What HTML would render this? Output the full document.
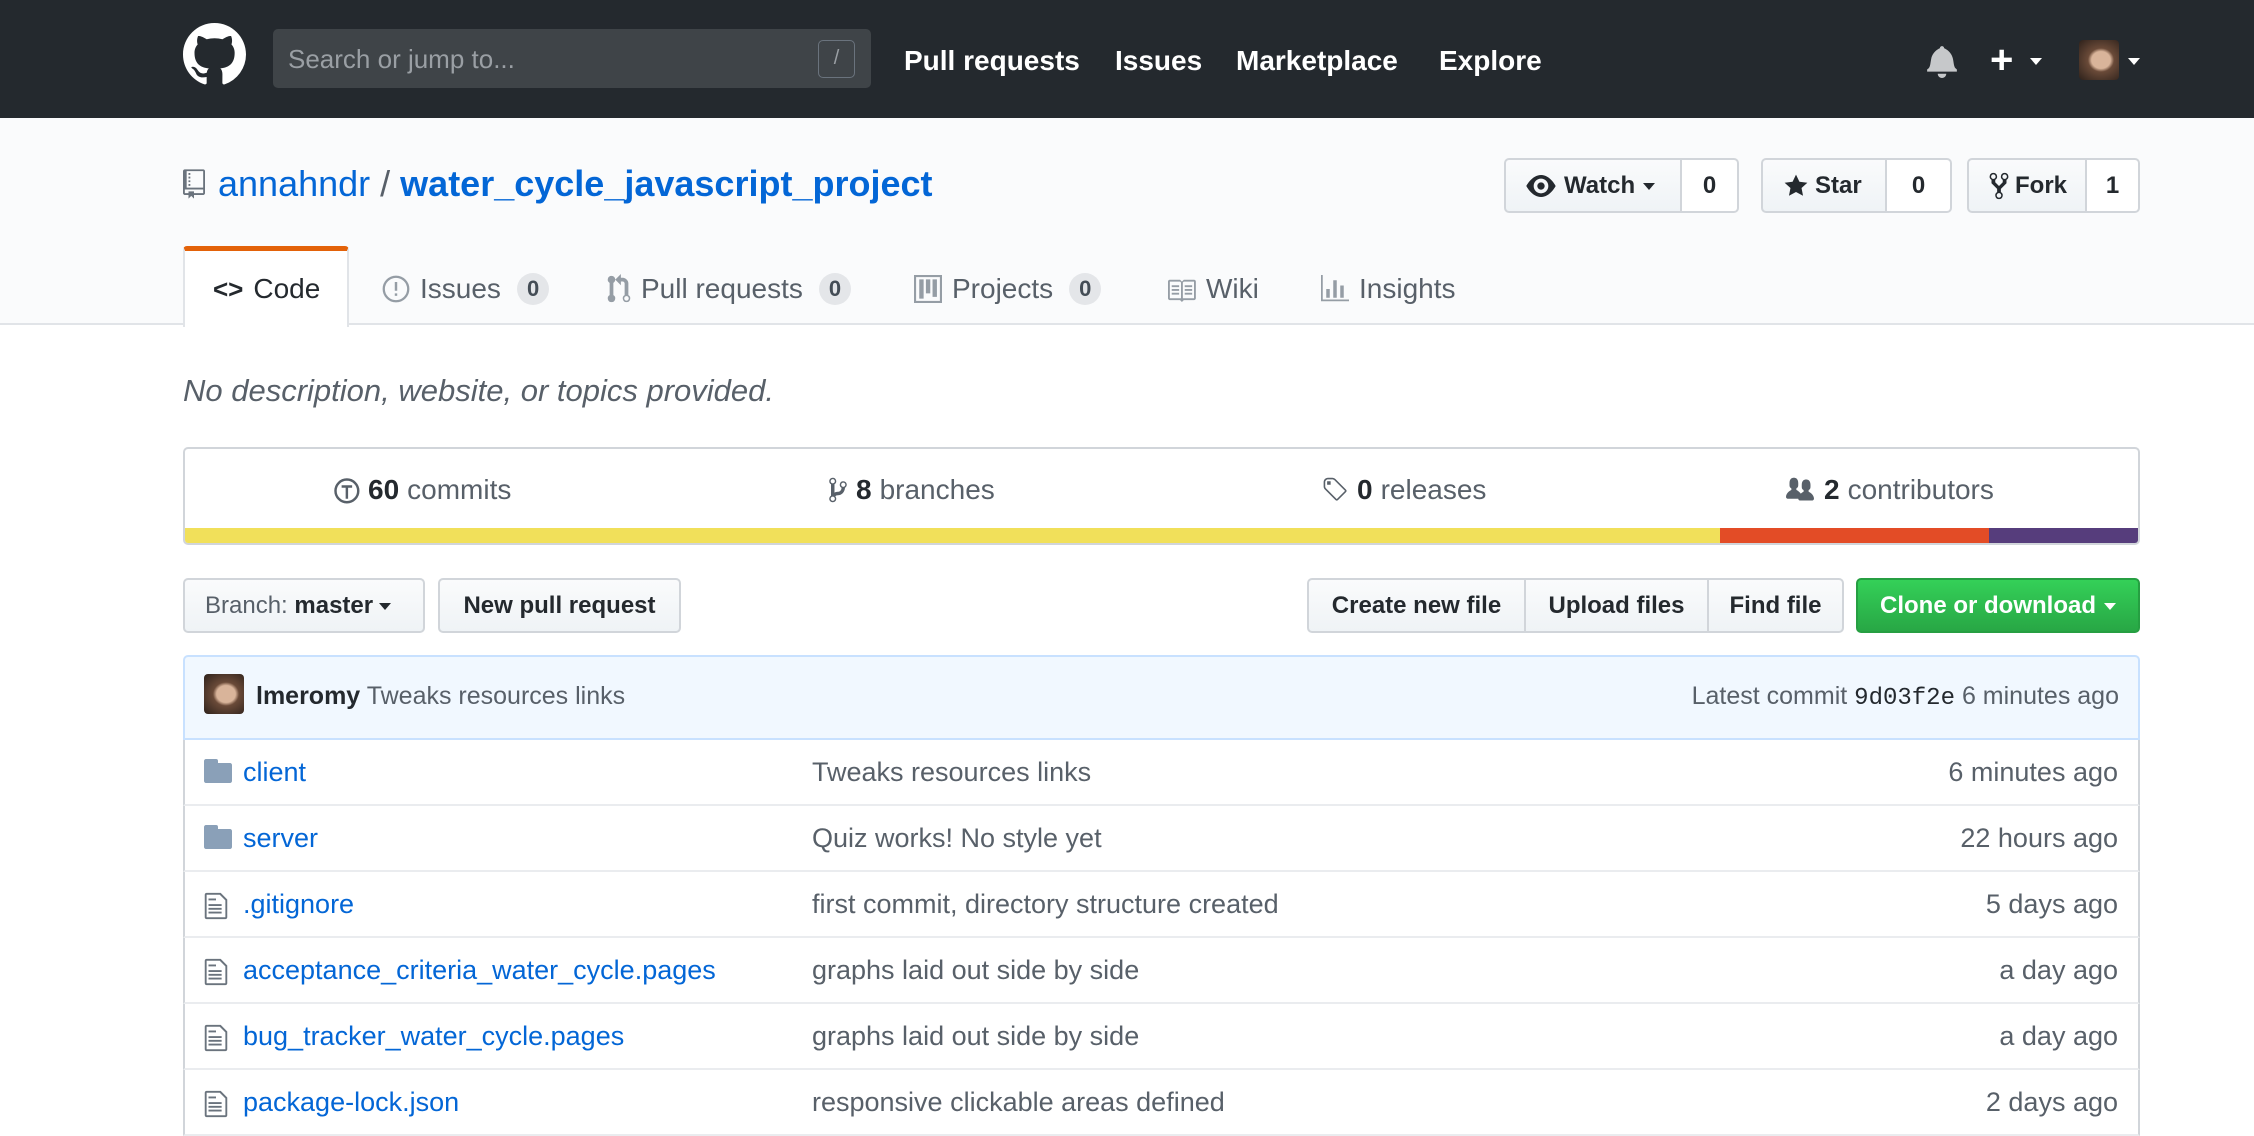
<!DOCTYPE html>
<html><head><meta charset="utf-8">
<style>
*{margin:0;padding:0;box-sizing:border-box}
body{width:2254px;height:1132px;overflow:hidden;background:#fff;font-family:"Liberation Sans",sans-serif;position:relative;color:#24292e}
.a{position:absolute}
.hdr{left:0;top:0;width:2254px;height:118px;background:#24292e}
.nav{color:#fff;font-weight:bold;font-size:28px;top:45px}
.rh{left:0;top:118px;width:2254px;height:207px;background:#fafbfc;border-bottom:2px solid #e1e4e8}
.btn{border:2px solid #d1d5da;background:linear-gradient(#fafbfc,#eff3f6);font-weight:bold;font-size:24px;display:flex;align-items:center;color:#24292e}
.cnt{background:#fff;border:2px solid #d1d5da;border-left:none;font-weight:bold;font-size:24px;display:flex;align-items:center;justify-content:center}
.tab{font-size:28px;color:#586069;top:273px;display:flex;align-items:center;gap:10px}
.ctr{display:inline-block;background:#e4e6e9;border-radius:18px;font-size:22px;font-weight:bold;color:#444d56;padding:3px 10px;margin-left:6px}
.st{font-size:28px;color:#586069;top:474px;display:flex;align-items:center;gap:8px}
.st b{color:#24292e}
.row{left:183px;width:1957px;height:66px;border:2px solid #d1d5da;border-top:none;border-bottom:2px solid #eaecef;font-size:27px}
.row .n{position:absolute;left:58px;top:17px;color:#0366d6}
.row .m{position:absolute;left:627px;top:17px;color:#586069}
.row .t{position:absolute;right:20px;top:17px;color:#586069}
.row svg{position:absolute;left:19px;top:19px}
</style></head><body>
<div class="a hdr"></div>
<svg class="a" style="left:183px;top:23px" width="63" height="63" viewBox="0 0 16 16"><path fill="#fff" d="M8 0C3.58 0 0 3.58 0 8c0 3.540 2.290 6.530 5.470 7.590.4.07.55-.17.55-.38 0-.19-.01-.82-.01-1.490-2.010.37-2.530-.49-2.690-.94-.09-.23-.48-.94-.82-1.130-.28-.15-.68-.52-.01-.53.63-.01 1.080.58 1.230.82.72 1.210 1.870.87 2.330.66.07-.52.28-.87.51-1.070-1.780-.2-3.640-.89-3.640-3.950 0-.87.31-1.590.82-2.150-.08-.2-.36-1.020.08-2.120 0 0 .67-.21 2.200.82.64-.18 1.320-.27 2-.27.68 0 1.360.09 2 .27 1.530-1.040 2.200-.82 2.200-.82.44 1.100.16 1.920.08 2.120.51.56.82 1.270.82 2.150 0 3.070-1.870 3.750-3.650 3.950.29.25.54.73.54 1.480 0 1.070-.01 1.930-.01 2.200 0 .21.15.46.55.38A8.013 8.013 0 0016 8c0-4.420-3.580-8-8-8z"/></svg>
<div class="a" style="left:273px;top:29px;width:598px;height:59px;background:#3f4448;border-radius:5px"></div>
<div class="a" style="left:288px;top:44px;font-size:26px;color:#9a9fa4">Search or jump to...</div>
<div class="a" style="left:818px;top:40px;width:37px;height:38px;border:1.5px solid #6a737d;border-radius:5px;color:#9a9fa4;font-size:20px;text-align:center;line-height:34px">/</div>
<div class="a nav" style="left:904px">Pull requests</div>
<div class="a nav" style="left:1115px">Issues</div>
<div class="a nav" style="left:1236px">Marketplace</div>
<div class="a nav" style="left:1439px">Explore</div>
<svg class="a" style="left:1927px;top:44px" width="30" height="34" viewBox="0 0 14 16"><path fill="#c6c8ca" d="M14 12v1H0v-1l.73-.58c.77-.77.81-2.550 1.190-4.420C2.690 3.230 6 2 6 2c0-.55.45-1 1-1s1 .45 1 1c0 0 3.390 1.230 4.160 5 .38 1.880.42 3.660 1.190 4.420l.66.58H14zm-7 4c1.110 0 2-.89 2-2H5c0 1.110.89 2 2 2z"/></svg>
<div class="a" style="left:1990px;top:40px;color:#fff;font-size:40px;font-weight:bold;line-height:40px">+</div>
<div class="a" style="left:2030px;top:58px;border:6px solid transparent;border-top:7px solid #fff"></div>
<div class="a" style="left:2079px;top:40px;width:40px;height:40px;border-radius:4px;background:radial-gradient(ellipse at 55% 50%,#d9b49a 0 30%,#6a4a38 42%,#2d211b 100%)"></div>
<div class="a" style="left:2128px;top:58px;border:6px solid transparent;border-top:7px solid #fff"></div>

<div class="a rh"></div>
<svg class="a" style="left:183px;top:168px" width="22" height="32" viewBox="0 0 12 16"><path fill="#6a737d" d="M4 9H3V8h1v1zm0-3H3v1h1V6zm0-2H3v1h1V4zm0-2H3v1h1V2zm8-1v12c0 .55-.45 1-1 1H6v2l-1.500-1.500L3 16v-2H1c-.55 0-1-.45-1-1V1c0-.55.45-1 1-1h10c.55 0 1 .45 1 1zm-1 10H1v2h2v-1h3v1h5v-2zm0-10H2v9h9V1z"/></svg>
<div class="a" style="left:218px;top:163px;font-size:36px;color:#0366d6">annahndr <span style="color:#586069">/</span> <b>water_cycle_javascript_project</b></div>

<div class="a btn" style="left:1504px;top:158px;width:178px;height:55px;border-radius:5px 0 0 5px;padding-left:20px;gap:8px"><svg width="30" height="22" viewBox="0 0 16 12"><path fill="#24292e" d="M8.060 0C3 0 0 6 0 6s3 6 8.060 6C13 12 16 6 16 6s-3-6-7.940-6zM8 10c-2.200 0-4-1.780-4-4 0-2.200 1.800-4 4-4 2.220 0 4 1.800 4 4 0 2.220-1.780 4-4 4zm2-4c0 1.110-.89 2-2 2-1.110 0-2-.89-2-2 0-1.110.89-2 2-2 1.110 0 2 .89 2 2z"/></svg>Watch<span style="border:6px solid transparent;border-top:7px solid #24292e;margin-top:7px"></span></div>
<div class="a cnt" style="left:1682px;top:158px;width:57px;height:55px;border-radius:0 5px 5px 0">0</div>
<div class="a btn" style="left:1761px;top:158px;width:126px;height:55px;border-radius:5px 0 0 5px;padding-left:20px;gap:6px"><svg width="26" height="26" viewBox="0 0 14 16"><path fill="#24292e" d="M14 6l-4.900-.64L7 1 4.900 5.360 0 6l3.600 3.260L2.670 14 7 11.670 11.330 14l-.93-4.740L14 6z"/></svg>Star</div>
<div class="a cnt" style="left:1887px;top:158px;width:65px;height:55px;border-radius:0 5px 5px 0">0</div>
<div class="a btn" style="left:1967px;top:158px;width:120px;height:55px;border-radius:5px 0 0 5px;padding-left:20px;gap:6px"><svg width="20" height="30" viewBox="0 0 10 16"><path fill="#24292e" d="M8 1a1.993 1.993 0 00-1 3.720V6L5 8 3 6V4.720A1.993 1.993 0 002 1a1.993 1.993 0 00-1 3.720V6.500l3 3v1.780A1.993 1.993 0 005 15a1.993 1.993 0 001-3.720V9.500l3-3V4.720A1.993 1.993 0 008 1zM2 4.200C1.340 4.200.8 3.650.8 3c0-.65.55-1.200 1.200-1.200.65 0 1.200.55 1.200 1.200 0 .65-.55 1.200-1.200 1.200zm3 10c-.66 0-1.200-.55-1.200-1.200 0-.65.55-1.200 1.200-1.200.65 0 1.200.55 1.200 1.200 0 .65-.55 1.200-1.200 1.200zm3-10c-.66 0-1.200-.55-1.200-1.200 0-.65.55-1.200 1.200-1.200.65 0 1.200.55 1.200 1.200 0 .65-.55 1.200-1.200 1.200z"/></svg>Fork</div>
<div class="a cnt" style="left:2087px;top:158px;width:53px;height:55px;border-radius:0 5px 5px 0">1</div>

<div class="a" style="left:183px;top:246px;width:166px;height:81px;background:#fff;border:2px solid #e1e4e8;border-top:5px solid #e36209;border-bottom:none;border-radius:4px 4px 0 0"></div>
<div class="a tab" style="left:213px;color:#24292e"><b style="font-size:26px">&lt;&gt;</b> Code</div>
<div class="a tab" style="left:382px"><svg width="28" height="28" viewBox="0 0 16 16"><circle cx="8" cy="8" r="7" fill="none" stroke="#959da5" stroke-width="1.3"/><rect x="7.300" y="4" width="1.400" height="5" fill="#959da5"/><rect x="7.300" y="10.500" width="1.400" height="1.400" fill="#959da5"/></svg>Issues<span class="ctr">0</span></div>
<div class="a tab" style="left:607px"><svg width="24" height="30" viewBox="0 0 12 16"><path fill="#959da5" d="M11 11.280V5c-.03-.78-.34-1.470-.94-2.060C9.460 2.350 8.780 2.030 8 2H7V0L4 3l3 3V4h1c.27.02.48.11.69.31.21.2.3.42.31.69v6.280A1.993 1.993 0 0010 15a1.993 1.993 0 001-3.720zm-1 2.920c-.66 0-1.200-.55-1.200-1.200 0-.65.55-1.200 1.200-1.200.65 0 1.200.55 1.200 1.200 0 .65-.55 1.200-1.200 1.200zM4 3c0-1.110-.89-2-2-2a1.993 1.993 0 00-1 3.720v6.560A1.993 1.993 0 002 15a1.993 1.993 0 001-3.720V4.720c.59-.34 1-.98 1-1.720z"/></svg>Pull requests<span class="ctr">0</span></div>
<div class="a tab" style="left:914px"><svg width="28" height="28" viewBox="0 0 16 16"><rect x="0.600" y="0.600" width="14.800" height="14.800" fill="none" stroke="#959da5" stroke-width="1.200"/><rect x="3" y="2.500" width="2.500" height="11" fill="#959da5"/><rect x="6.800" y="2.500" width="2.500" height="8" fill="#959da5"/><rect x="10.600" y="2.500" width="2.500" height="10" fill="#959da5"/></svg>Projects<span class="ctr">0</span></div>
<div class="a tab" style="left:1166px"><svg width="30" height="26" viewBox="0 0 16 14"><path fill="#959da5" d="M3 5h4v1H3V5zm0 3h4V7H3v1zm0 2h4V9H3v1zm11-5h-4v1h4V5zm0 2h-4v1h4V7zm0 2h-4v1h4V9zm2-6v9c0 .55-.45 1-1 1H9.500l-1 1-1-1H2c-.55 0-1-.45-1-1V3c0-.55.45-1 1-1h5.500l1 1 1-1H15c.55 0 1 .45 1 1zm-8 .5L7.500 3H2v9h6V3.500zm7-.5H9.500l-.5.5V12h6V3z"/></svg>Wiki</div>
<div class="a tab" style="left:1321px"><svg width="28" height="28" viewBox="0 0 16 16"><path fill="#959da5" d="M16 14v1H0V0h1v14h15zM5 13H3V8h2v5zm4 0H7V3h2v10zm4 0h-2V6h2v7z"/></svg>Insights</div>

<div class="a" style="left:183px;top:373px;font-size:31px;font-style:italic;color:#586069">No description, website, or topics provided.</div>

<div class="a" style="left:183px;top:447px;width:1957px;height:98px;border:2px solid #d1d5da;border-radius:5px;overflow:hidden">
<div class="a" style="left:0;bottom:0;width:1535px;height:15px;background:#f1e05a"></div>
<div class="a" style="left:1535px;bottom:0;width:269px;height:15px;background:#e34c26"></div>
<div class="a" style="left:1804px;bottom:0;width:160px;height:15px;background:#563d7c"></div>
</div>
<div class="a st" style="left:332px"><svg width="28" height="28" viewBox="0 0 16 16"><circle cx="8.500" cy="8.500" r="6.500" fill="none" stroke="#586069" stroke-width="1.400"/><path d="M5.500 6h6M8.500 6v7" stroke="#586069" stroke-width="1.400"/></svg><b>60</b> commits</div>
<div class="a st" style="left:828px"><svg width="20" height="28" viewBox="0 0 10 16"><path fill="#586069" d="M10 5c0-1.110-.89-2-2-2a1.993 1.993 0 00-1 3.720v.3c-.02.52-.23.98-.63 1.380-.4.4-.86.61-1.380.63-.83.02-1.480.16-2 .45V4.720a1.993 1.993 0 00-1-3.720C.88 1 0 1.890 0 3a2 2 0 001 1.720v6.560c-.59.35-1 .99-1 1.720 0 1.110.89 2 2 2 1.110 0 2-.89 2-2 0-.53-.2-1-.53-1.360.09-.06.48-.41.59-.47.25-.11.56-.17.94-.17 1.050-.05 1.950-.45 2.750-1.250S8.950 7.770 9 6.730h-.02C9.590 6.370 10 5.730 10 5zM2 1.800c.66 0 1.200.55 1.200 1.200 0 .65-.55 1.200-1.200 1.200C1.350 4.200.8 3.650.8 3c0-.65.55-1.200 1.200-1.200zm0 12.410c-.66 0-1.200-.55-1.200-1.200 0-.65.55-1.200 1.200-1.200.65 0 1.200.55 1.200 1.200 0 .65-.55 1.200-1.200 1.200zm6-8c-.66 0-1.200-.55-1.200-1.200 0-.65.55-1.200 1.200-1.200.65 0 1.200.55 1.200 1.200 0 .65-.55 1.200-1.200 1.200z"/></svg><b>8</b> branches</div>
<div class="a st" style="left:1321px"><svg width="28" height="28" viewBox="0 0 15 16"><path fill="#586069" d="M7.730 1.730C7.260 1.260 6.620 1 5.960 1H3.500C2.130 1 1 2.130 1 3.500v2.470c0 .66.27 1.300.73 1.770l6.060 6.060c.39.39 1.020.39 1.410 0l4.590-4.590a.996.996 0 000-1.410L7.730 1.730zM2.380 7.090c-.31-.3-.47-.7-.47-1.130V3.500c0-.88.72-1.590 1.590-1.590h2.470c.42 0 .83.16 1.130.47l6.140 6.130-4.730 4.730-6.130-6.150zM3.010 3h2v2H3V3h.01z"/></svg><b>0</b> releases</div>
<div class="a st" style="left:1784px"><svg width="32" height="28" viewBox="0 0 16 16"><path fill="#586069" d="M16 12.999c0 .439-.45 1-1 1H7.995c-.539 0-.994-.447-.995-.999H1c-.54 0-1-.561-1-1 0-2.634 3-4 3-4s.229-.409 0-1c-.841-.621-1.058-.59-1-3 .058-2.419 1.367-3 2.500-3s2.442.58 2.500 3c.058 2.410-.159 2.379-1 3-.229.59 0 1 0 1s1.549.711 2.420 2.088C9.196 9.369 10 8.999 10 8.999s.229-.409 0-1c-.841-.62-1.058-.59-1-3 .058-2.419 1.367-3 2.500-3s2.437.581 2.495 3c.059 2.410-.158 2.380-1 3-.229.59 0 1 0 1s3.005 1.366 3.005 4z"/></svg><b>2</b> contributors</div>

<div class="a btn" style="left:183px;top:578px;width:242px;height:55px;border-radius:5px;padding-left:20px;font-weight:normal;color:#586069">Branch:&nbsp;<b style="color:#24292e">master</b><span style="border:6px solid transparent;border-top:7px solid #24292e;margin:7px 0 0 6px"></span></div>
<div class="a btn" style="left:438px;top:578px;width:243px;height:55px;border-radius:5px;justify-content:center">New pull request</div>
<div class="a btn" style="left:1307px;top:578px;width:219px;height:55px;border-radius:5px 0 0 5px;justify-content:center">Create new file</div>
<div class="a btn" style="left:1526px;top:578px;width:183px;height:55px;border-left:none;justify-content:center">Upload files</div>
<div class="a btn" style="left:1707px;top:578px;width:137px;height:55px;border-left:2px solid #d1d5da;border-radius:0 5px 5px 0;justify-content:center">Find file</div>
<div class="a btn" style="left:1856px;top:578px;width:284px;height:55px;border-radius:5px;justify-content:center;gap:8px;background:linear-gradient(#34d058,#28a745);border-color:#269f42;color:#fff">Clone or download<span style="border:6px solid transparent;border-top:7px solid #fff;margin-top:7px"></span></div>

<div class="a" style="left:183px;top:655px;width:1957px;height:85px;background:#f1f8ff;border:2px solid #c8e1ff;border-radius:5px 5px 0 0"></div>
<div class="a" style="left:204px;top:674px;width:40px;height:40px;border-radius:4px;background:radial-gradient(ellipse at 55% 50%,#d9b49a 0 30%,#6a4a38 42%,#2d211b 100%)"></div>
<div class="a" style="left:256px;top:682px;font-size:25px;color:#586069"><b style="color:#24292e">lmeromy</b> Tweaks resources links</div>
<div class="a" style="right:135px;top:682px;font-size:25px;color:#586069">Latest commit <span style="font-family:'Liberation Mono',monospace;color:#24292e;font-size:24px">9d03f2e</span> 6 minutes ago</div>

<div class="a row" style="top:740px"><svg width="28" height="24" viewBox="0 0 14 12"><path style="fill:#8aa0b8" d="M13 2H7V1c0-.66-.31-1-1-1H1c-.55 0-1 .45-1 1v10c0 .55.45 1 1 1h12c.55 0 1-.45 1-1V3c0-.55-.45-1-1-1z"/></svg><span class="n">client</span><span class="m">Tweaks resources links</span><span class="t">6 minutes ago</span></div>
<div class="a row" style="top:806px"><svg width="28" height="24" viewBox="0 0 14 12"><path style="fill:#8aa0b8" d="M13 2H7V1c0-.66-.31-1-1-1H1c-.55 0-1 .45-1 1v10c0 .55.45 1 1 1h12c.55 0 1-.45 1-1V3c0-.55-.45-1-1-1z"/></svg><span class="n">server</span><span class="m">Quiz works! No style yet</span><span class="t">22 hours ago</span></div>
<div class="a row" style="top:872px"><svg width="24" height="30" viewBox="0 0 12 16"><path fill="#6a737d" d="M6 5H2V4h4v1zM2 8h7V7H2v1zm0 2h7V9H2v1zm0 2h7v-1H2v1zm10-7.500V14c0 .55-.45 1-1 1H1c-.55 0-1-.45-1-1V2c0-.55.45-1 1-1h7.500L12 4.500zM11 5L8 2H1v12h10V5z"/></svg><span class="n">.gitignore</span><span class="m">first commit, directory structure created</span><span class="t">5 days ago</span></div>
<div class="a row" style="top:938px"><svg width="24" height="30" viewBox="0 0 12 16"><path fill="#6a737d" d="M6 5H2V4h4v1zM2 8h7V7H2v1zm0 2h7V9H2v1zm0 2h7v-1H2v1zm10-7.500V14c0 .55-.45 1-1 1H1c-.55 0-1-.45-1-1V2c0-.55.45-1 1-1h7.500L12 4.500zM11 5L8 2H1v12h10V5z"/></svg><span class="n">acceptance_criteria_water_cycle.pages</span><span class="m">graphs laid out side by side</span><span class="t">a day ago</span></div>
<div class="a row" style="top:1004px"><svg width="24" height="30" viewBox="0 0 12 16"><path fill="#6a737d" d="M6 5H2V4h4v1zM2 8h7V7H2v1zm0 2h7V9H2v1zm0 2h7v-1H2v1zm10-7.500V14c0 .55-.45 1-1 1H1c-.55 0-1-.45-1-1V2c0-.55.45-1 1-1h7.500L12 4.500zM11 5L8 2H1v12h10V5z"/></svg><span class="n">bug_tracker_water_cycle.pages</span><span class="m">graphs laid out side by side</span><span class="t">a day ago</span></div>
<div class="a row" style="top:1070px"><svg width="24" height="30" viewBox="0 0 12 16"><path fill="#6a737d" d="M6 5H2V4h4v1zM2 8h7V7H2v1zm0 2h7V9H2v1zm0 2h7v-1H2v1zm10-7.500V14c0 .55-.45 1-1 1H1c-.55 0-1-.45-1-1V2c0-.55.45-1 1-1h7.500L12 4.500zM11 5L8 2H1v12h10V5z"/></svg><span class="n">package-lock.json</span><span class="m">responsive clickable areas defined</span><span class="t">2 days ago</span></div>
</body></html>
